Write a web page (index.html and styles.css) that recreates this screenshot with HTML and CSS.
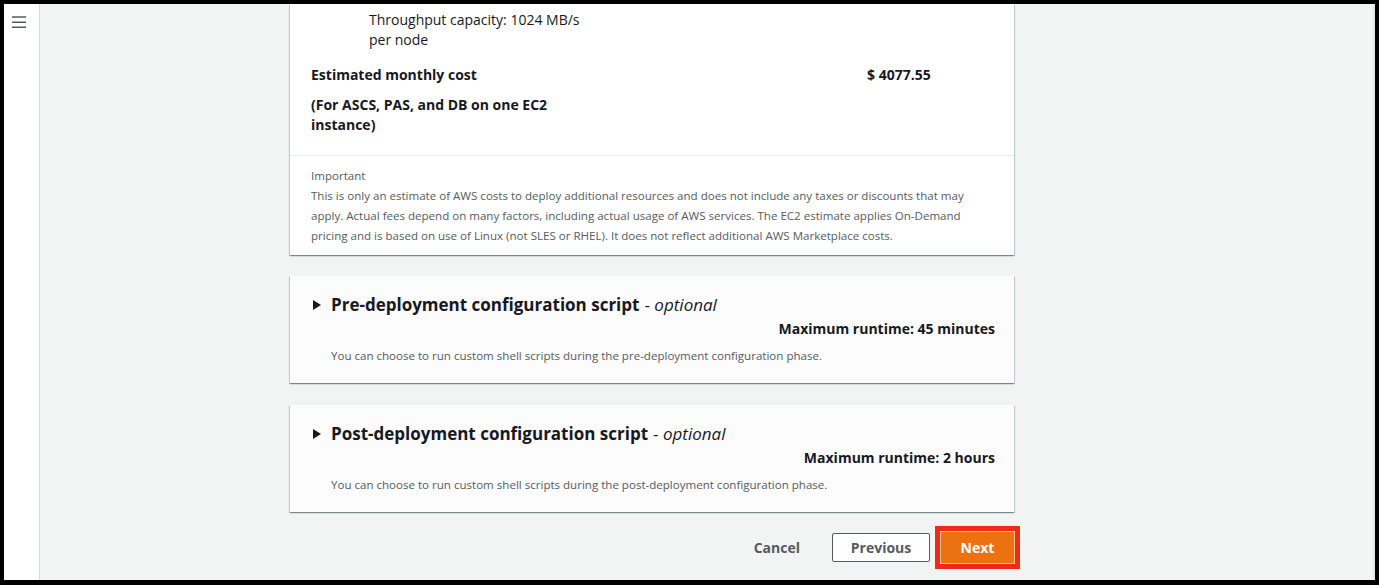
FILE: index.html
```html
<!DOCTYPE html>
<html lang="en">
<head>
<meta charset="utf-8">
<title>Review</title>
<link rel="stylesheet" href="styles.css">
</head>
<body>
<div class="frame">
  <div class="app">
    <aside class="sidebar">
      <button class="menu" aria-label="Open navigation">
        <svg width="14" height="12" viewBox="0 0 14 12"><path d="M0 1h14M0 6.2h14M0 11.2h14" stroke="#545b64" stroke-width="1.6" fill="none"/></svg>
      </button>
    </aside>
    <main class="content">
      <section class="card cost-card">
        <div class="cost-body">
          <p class="spec">Throughput capacity: 1024 MB/s per node</p>
          <div class="cost-row">
            <div class="cost-label">
              <p class="strong">Estimated monthly cost</p>
              <p class="strong sub">(For ASCS, PAS, and DB on one EC2 instance)</p>
            </div>
            <p class="strong cost-value">$ 4077.55</p>
          </div>
        </div>
        <div class="note">
          <p class="note-title">Important</p>
          <p class="note-text">This is only an estimate of AWS costs to deploy additional resources and does not include any taxes or discounts that may<br>apply. Actual fees depend on many factors, including actual usage of AWS services. The EC2 estimate applies On-Demand<br>pricing and is based on use of Linux (not SLES or RHEL). It does not reflect additional AWS Marketplace costs.</p>
        </div>
      </section>

      <section class="card expand">
        <h2 class="expand-title"><span class="caret"></span>Pre-deployment configuration script <span class="opt">- <em>optional</em></span></h2>
        <p class="runtime">Maximum runtime: 45 minutes</p>
        <p class="desc">You can choose to run custom shell scripts during the pre-deployment configuration phase.</p>
      </section>

      <section class="card expand">
        <h2 class="expand-title"><span class="caret"></span>Post-deployment configuration script <span class="opt">- <em>optional</em></span></h2>
        <p class="runtime">Maximum runtime: 2 hours</p>
        <p class="desc">You can choose to run custom shell scripts during the post-deployment configuration phase.</p>
      </section>

      <div class="actions">
        <button class="btn link">Cancel</button>
        <button class="btn normal">Previous</button>
        <span class="highlight"><button class="btn primary">Next</button></span>
      </div>
    </main>
  </div>
</div>
</body>
</html>
```
FILE: styles.css
```css
* { box-sizing: border-box; }
html, body { margin: 0; padding: 0; }
body {
  background: #000;
  font-family: "Open Sans", "Noto Sans", "Liberation Sans", sans-serif;
  color: #16191f;
  width: 1379px;
  height: 585px;
  overflow: hidden;
}
p { margin: 0; }
.frame {
  padding: 4px 4px 5px 4px;
  height: 585px;
}
.app {
  display: flex;
  height: 576px;
  width: 1371px;
  background: #f2f3f3;
  border-right: 2px solid #e4e6e6;
  overflow: hidden;
}
.sidebar {
  width: 36px;
  flex: none;
  background: #fff;
  border-right: 1px solid #d5dbdb;
}
.menu {
  display: block;
  margin: 12px 0 0 8px;
  padding: 0;
  border: 0;
  background: none;
  line-height: 0;
}
.content {
  flex: 1;
  padding-left: 250px;
}
.card {
  width: 724px;
  background: #fff;
  box-shadow: 0 1px 1px 0 rgba(0,28,36,.3), 1px 1px 1px 0 rgba(0,28,36,.15), -1px 1px 1px 0 rgba(0,28,36,.15);
}
.cost-body {
  padding: 6px 20px 20px 21px;
  border-bottom: 1px solid #eaeded;
  font-size: 14px;
  line-height: 20px;
}
.spec {
  margin-left: 58px;
  width: 220px;
}
.cost-row {
  display: grid;
  grid-template-columns: 556px auto;
  margin-top: 15px;
}
.strong { font-weight: 700; }
.sub { margin-top: 10px; width: 270px; }
.note {
  padding: 10px 20px 9px 21px;
  font-size: 11.55px;
  line-height: 20px;
  color: #545b64;
}
.expand {
  margin-top: 21px;
  padding: 18px 19px 17px 23px;
  background: #fcfcfc;
}
.expand + .expand { margin-top: 22px; }
.expand-title {
  display: flex;
  align-items: center;
  margin: 0;
  font-size: 17px;
  line-height: 22px;
  font-weight: 700;
}
.caret {
  width: 0;
  height: 0;
  border-top: 5px solid transparent;
  border-bottom: 5px solid transparent;
  border-left: 8px solid #16191f;
  margin-right: 10px;
}
.opt {
  font-weight: 400;
  margin-left: 5px;
  white-space: pre;
}
.runtime {
  margin-top: 3px;
  text-align: right;
  font-size: 14px;
  line-height: 20px;
  font-weight: 700;
}
.desc {
  margin-top: 7px;
  padding-left: 18px;
  font-size: 11.55px;
  line-height: 20px;
  color: #545b64;
}
.actions {
  width: 725px;
  display: flex;
  justify-content: flex-end;
  align-items: center;
  margin-top: 19px;
}
.btn {
  font-family: inherit;
  font-size: 14px;
  font-weight: 700;
  line-height: 20px;
  cursor: pointer;
  border-radius: 2px;
}
.link {
  border: 0;
  background: none;
  color: #545b64;
  padding: 4px 20px;
  margin-right: 12px;
}
.normal {
  width: 98px;
  height: 29px;
  background: #fff;
  border: 1px solid #545b64;
  color: #545b64;
  padding: 0;
}
.highlight {
  display: block;
  border: 5px solid #ee2a1a;
  margin: -5px -5px -5px 5px;
  line-height: 0;
}
.primary {
  display: block;
  width: 75px;
  height: 33px;
  background: #ec7211;
  border: 1px solid #f6c08f;
  color: #fff;
  padding: 0;
}
```
